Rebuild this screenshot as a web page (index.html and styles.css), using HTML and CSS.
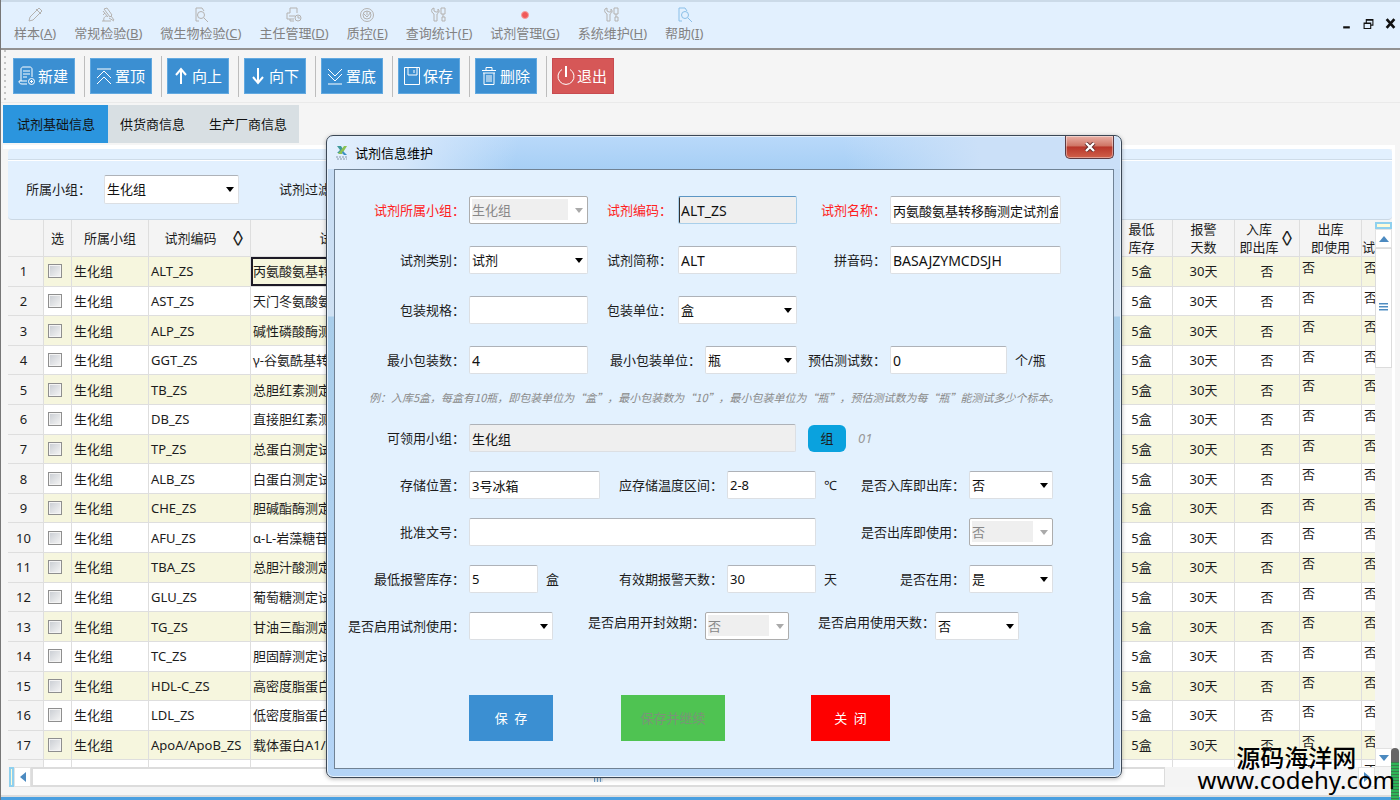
FILE: index.html
```html
<!DOCTYPE html>
<html lang="zh-CN">

<head>
  <meta charset="UTF-8">
  <meta name="viewport" content="width=device-width, initial-scale=1.0">
  <title>试剂信息维护</title>
  <link rel="stylesheet" href="styles.css">
</head>

<body>
  <header class="menubar">
    <nav class="menu">
      <a href="#">
        <svg viewBox="0 0 16 16"><path d="M2 14l1-4 7-7 3 3-7 7zM9 2l5 5M10 3l2-2 3 3-2 2"/></svg>
        <span>样本(<u>A</u>)</span>
      </a>
      <a href="#">
        <svg viewBox="0 0 16 16"><path d="M4 2l3-1 5 7-2 2zM3 4l5 6M2 14h9M4 14c-1-3 1-5 3-5M9 11l5 3M11 9l3 4M5 6l-2 2"/></svg>
        <span>常规检验(<u>B</u>)</span>
      </a>
      <a href="#">
        <svg viewBox="0 0 16 16"><path d="M3 14V1h6l2 3M3 14h3"/><circle cx="8" cy="8" r="3.5"/><path d="M11 11l4 4"/></svg>
        <span>微生物检验(<u>C</u>)</span>
      </a>
      <a href="#">
        <svg viewBox="0 0 16 16"><path d="M4 6V1h7v5M4 6H1v6h7M3 9h6M4 12v2h4"/><circle cx="12" cy="11" r="3"/><path d="M12 9v2h2"/></svg>
        <span>主任管理(<u>D</u>)</span>
      </a>
      <a href="#">
        <svg viewBox="0 0 16 16"><circle cx="8" cy="8" r="6.5"/><circle cx="8" cy="8" r="4"/><path d="M5 7l3 3 4-5M8 4v4"/></svg>
        <span>质控(<u>E</u>)</span>
      </a>
      <a href="#">
        <svg viewBox="0 0 16 16"><path d="M1 2c-1 2 0 4 2 5v7h3V7c2-1 3-3 1-5v3H5L3 4V1zM10 1h4v6h-4zM12 7v3M11 10h3v4h-3z"/></svg>
        <span>查询统计(<u>F</u>)</span>
      </a>
      <a href="#">
        <svg viewBox="0 0 16 16"><circle class="dot" cx="8" cy="8" r="3.5"/></svg>
        <span>试剂管理(<u>G</u>)</span>
      </a>
      <a href="#">
        <svg viewBox="0 0 16 16"><path d="M1 2c-1 2 0 4 2 5v7h3V7c2-1 3-3 1-5v3H5L3 4V1zM10 1h4v6h-4zM12 7v3M11 10h3v4h-3z"/></svg>
        <span>系统维护(<u>H</u>)</span>
      </a>
      <a href="#">
        <svg class="help" viewBox="0 0 16 16"><path d="M3 14V1h6l2 3M3 14h3"/><circle cx="9" cy="8" r="3.5"/><path d="M12 11l4 4"/></svg>
        <span>帮助(<u>I</u>)</span>
      </a>
    </nav>
    <div class="window-buttons">
      <button type="button" aria-label="最小化"><svg viewBox="0 0 10 10"><path d="M2 8.500h6" stroke-width="2"/></svg></button>
      <button type="button" aria-label="还原"><svg viewBox="0 0 10 10"><path d="M1 4.500h6v5H1zM1 5h6M3 4V1.500h6v5H7M3 2h6"/></svg></button>
      <button type="button" aria-label="关闭"><svg viewBox="0 0 10 10"><path d="M1.500 1l7 8M8.500 1l-7 8" stroke-width="2.400"/></svg></button>
    </div>
  </header>

  <div class="toolbar">
    <button type="button" class="tool">
      <svg viewBox="0 0 18 20"><path d="M9 18H4c-2 0-3-1-3-3h8M3 15V3c0-1 1-2 2-2h7c1 0 2 1 2 2v8M5 5h7M5 8h7M5 11h4"/><circle cx="13.500" cy="15.500" r="3"/><path d="M12 15.500h3M13.500 14v3"/></svg>新建
    </button>
    <button type="button" class="tool">
      <svg viewBox="0 0 18 20"><path d="M2 3h14M2 12l7-7 7 7M2 18l7-7 7 7"/></svg>置顶
    </button>
    <button type="button" class="tool">
      <svg viewBox="0 0 18 20"><path d="M9 18V4M4 9l5-6 5 6" stroke-width="2"/></svg>向上
    </button>
    <button type="button" class="tool">
      <svg viewBox="0 0 18 20"><path d="M9 2v14M4 11l5 6 5-6" stroke-width="2"/></svg>向下
    </button>
    <button type="button" class="tool">
      <svg viewBox="0 0 18 20"><path d="M2 18h14M2 3l7 7 7-7M2 8l7 7 7-7"/></svg>置底
    </button>
    <button type="button" class="tool">
      <svg viewBox="0 0 18 20"><path d="M1.500 1.500h15v17h-15zM5 2v7h9V2M11 4v3"/></svg>保存
    </button>
    <button type="button" class="tool">
      <svg viewBox="0 0 18 20"><path d="M2 4.500h14M6 4V1.500h6V4M3 7h12M4 7v11.500h10V7M7 9v7M9 9v7M11 9v7"/></svg>删除
    </button>
    <button type="button" class="tool exit">
      <svg viewBox="0 0 18 20"><path d="M5 3.500a8 8 0 1 0 8 0" /><path d="M9 0v11" stroke-width="2"/></svg>退出
    </button>
  </div>

  <nav class="tabs">
    <a href="#" class="active">试剂基础信息</a>
    <a href="#">供货商信息</a>
    <a href="#">生产厂商信息</a>
  </nav>

  <main class="content">
    <div class="filter">
      <label for="group">所属小组：</label>
      <select id="group">
        <option>生化组</option>
      </select>
      <span class="filter-next">试剂过滤：</span>
    </div>

    <div class="grid">
      <div class="grid-view">
        <table>
          <colgroup>
            <col class="c-num"><col class="c-check"><col class="c-group"><col class="c-code"><col class="c-name">
            <col><col class="c-std"><col class="c-std"><col class="c-in"><col class="c-std"><col class="c-last">
          </colgroup>
          <thead>
            <tr>
              <th></th><th>选</th><th>所属小组</th>
              <th class="sort one">试剂编码<i>◊</i></th>
              <th>试剂名称</th><th></th>
              <th>最低<br>库存</th><th>报警<br>天数</th>
              <th class="sort">入库<br>即出库<i>◊</i></th>
              <th>出库<br>即使用</th><th class="low">试</th>
            </tr>
          </thead>
          <tbody>
            <tr><th>1</th><td><input type="checkbox" aria-label="选择 1"></td><td>生化组</td><td>ALT_ZS</td><td class="current">丙氨酸氨基转移酶测定试剂盒</td><td></td><td>5盒</td><td>30天</td><td>否</td><td>否</td><td>否</td></tr>
            <tr><th>2</th><td><input type="checkbox" aria-label="选择 2"></td><td>生化组</td><td>AST_ZS</td><td>天门冬氨酸氨基转移酶</td><td></td><td>5盒</td><td>30天</td><td>否</td><td>否</td><td>否</td></tr>
            <tr><th>3</th><td><input type="checkbox" aria-label="选择 3"></td><td>生化组</td><td>ALP_ZS</td><td>碱性磷酸酶测定试剂盒</td><td></td><td>5盒</td><td>30天</td><td>否</td><td>否</td><td>否</td></tr>
            <tr><th>4</th><td><input type="checkbox" aria-label="选择 4"></td><td>生化组</td><td>GGT_ZS</td><td>γ-谷氨酰基转移酶</td><td></td><td>5盒</td><td>30天</td><td>否</td><td>否</td><td>否</td></tr>
            <tr><th>5</th><td><input type="checkbox" aria-label="选择 5"></td><td>生化组</td><td>TB_ZS</td><td>总胆红素测定试剂盒</td><td></td><td>5盒</td><td>30天</td><td>否</td><td>否</td><td>否</td></tr>
            <tr><th>6</th><td><input type="checkbox" aria-label="选择 6"></td><td>生化组</td><td>DB_ZS</td><td>直接胆红素测定试剂盒</td><td></td><td>5盒</td><td>30天</td><td>否</td><td>否</td><td>否</td></tr>
            <tr><th>7</th><td><input type="checkbox" aria-label="选择 7"></td><td>生化组</td><td>TP_ZS</td><td>总蛋白测定试剂盒</td><td></td><td>5盒</td><td>30天</td><td>否</td><td>否</td><td>否</td></tr>
            <tr><th>8</th><td><input type="checkbox" aria-label="选择 8"></td><td>生化组</td><td>ALB_ZS</td><td>白蛋白测定试剂盒</td><td></td><td>5盒</td><td>30天</td><td>否</td><td>否</td><td>否</td></tr>
            <tr><th>9</th><td><input type="checkbox" aria-label="选择 9"></td><td>生化组</td><td>CHE_ZS</td><td>胆碱酯酶测定试剂盒</td><td></td><td>5盒</td><td>30天</td><td>否</td><td>否</td><td>否</td></tr>
            <tr><th>10</th><td><input type="checkbox" aria-label="选择 10"></td><td>生化组</td><td>AFU_ZS</td><td>α-L-岩藻糖苷酶</td><td></td><td>5盒</td><td>30天</td><td>否</td><td>否</td><td>否</td></tr>
            <tr><th>11</th><td><input type="checkbox" aria-label="选择 11"></td><td>生化组</td><td>TBA_ZS</td><td>总胆汁酸测定试剂盒</td><td></td><td>5盒</td><td>30天</td><td>否</td><td>否</td><td>否</td></tr>
            <tr><th>12</th><td><input type="checkbox" aria-label="选择 12"></td><td>生化组</td><td>GLU_ZS</td><td>葡萄糖测定试剂盒</td><td></td><td>5盒</td><td>30天</td><td>否</td><td>否</td><td>否</td></tr>
            <tr><th>13</th><td><input type="checkbox" aria-label="选择 13"></td><td>生化组</td><td>TG_ZS</td><td>甘油三酯测定试剂盒</td><td></td><td>5盒</td><td>30天</td><td>否</td><td>否</td><td>否</td></tr>
            <tr><th>14</th><td><input type="checkbox" aria-label="选择 14"></td><td>生化组</td><td>TC_ZS</td><td>胆固醇测定试剂盒</td><td></td><td>5盒</td><td>30天</td><td>否</td><td>否</td><td>否</td></tr>
            <tr><th>15</th><td><input type="checkbox" aria-label="选择 15"></td><td>生化组</td><td>HDL-C_ZS</td><td>高密度脂蛋白胆固醇</td><td></td><td>5盒</td><td>30天</td><td>否</td><td>否</td><td>否</td></tr>
            <tr><th>16</th><td><input type="checkbox" aria-label="选择 16"></td><td>生化组</td><td>LDL_ZS</td><td>低密度脂蛋白胆固醇</td><td></td><td>5盒</td><td>30天</td><td>否</td><td>否</td><td>否</td></tr>
            <tr><th>17</th><td><input type="checkbox" aria-label="选择 17"></td><td>生化组</td><td>ApoA/ApoB_ZS</td><td>载体蛋白A1/B</td><td></td><td>5盒</td><td>30天</td><td>否</td><td>否</td><td>否</td></tr>
            <tr><th></th><td><input type="checkbox" aria-label="选择 18"></td><td></td><td></td><td></td><td></td><td></td><td></td><td></td><td>否</td><td>否</td></tr>
          </tbody>
        </table>
      </div>
      <div class="vscroll">
        <i class="split"></i>
        <button type="button" aria-label="向上滚动"><svg viewBox="0 0 10 6"><path d="M0 6l5-6 5 6z"/></svg></button>
        <div class="thumb"><i></i></div>
        <button type="button" class="end" aria-label="向下滚动"><svg viewBox="0 0 10 6"><path d="M0 0h10L5 6z"/></svg></button>
      </div>
      <div class="hscroll">
        <i class="split"></i>
        <button type="button" aria-label="向左滚动"><svg viewBox="0 0 6 10"><path d="M6 0v10L0 5z"/></svg></button>
        <div class="thumb"><i></i></div>
        <button type="button" class="end" aria-label="向右滚动"><svg viewBox="0 0 6 10"><path d="M0 0l6 5-6 5z"/></svg></button>
      </div>
    </div>
  </main>
  <footer class="statusbar"></footer>

  <section class="dialog" role="dialog" aria-labelledby="dialog-title">
    <div class="titlebar">
      <svg class="logo" viewBox="0 0 12 16">
        <path d="M1 1h4l2 3-2 4H1l3-3z" fill="#3f9a9a"/><path d="M11 1H8L2 9h4z" fill="#8cc152"/><path d="M7 6l4 4H8L6 8z" fill="#3b8fc4"/>
        <path d="M0 12h12M1 14h10" stroke="#8496a8" stroke-dasharray="2 1"/>
      </svg>
      <h1 id="dialog-title">试剂信息维护</h1>
      <button type="button" class="dialog-close" aria-label="关闭">
        <svg viewBox="0 0 12 10"><path d="M2 1l8 8M10 1L2 9" stroke="#5c2a2a" stroke-width="4"/><path d="M2 1l8 8M10 1L2 9" stroke="#fff" stroke-width="2.400"/></svg>
      </button>
    </div>

    <form class="dialog-body">
      <div class="row cols-basic">
        <label class="required" for="f-group">试剂所属小组：</label>
        <select id="f-group" disabled><option>生化组</option></select>
        <label class="required" for="f-code">试剂编码：</label>
        <input class="latin focused" id="f-code" type="text" value="ALT_ZS" readonly>
        <label class="required" for="f-name">试剂名称：</label>
        <input id="f-name" type="text" value="丙氨酸氨基转移酶测定试剂盒">
      </div>
      <div class="row cols-basic">
        <label for="f-type">试剂类别：</label>
        <select id="f-type"><option>试剂</option></select>
        <label for="f-short">试剂简称：</label>
        <input class="latin" id="f-short" type="text" value="ALT">
        <label for="f-pinyin">拼音码：</label>
        <input class="latin" id="f-pinyin" type="text" value="BASAJZYMCDSJH">
      </div>
      <div class="row cols-basic">
        <label for="f-spec">包装规格：</label>
        <input id="f-spec" type="text">
        <label for="f-unit">包装单位：</label>
        <select id="f-unit"><option>盒</option></select>
      </div>
      <div class="row cols-pack">
        <label for="f-min">最小包装数：</label>
        <input class="latin" id="f-min" type="text" value="4">
        <label for="f-minunit">最小包装单位：</label>
        <select id="f-minunit"><option>瓶</option></select>
        <label for="f-tests">预估测试数：</label>
        <input class="latin" id="f-tests" type="text" value="0">
        <span class="unit">个/瓶</span>
      </div>
      <p class="hint">例：入库5盒，每盒有10瓶，即包装单位为“盒”，最小包装数为“10”，最小包装单位为“瓶”，预估测试数为每“瓶”能测试多少个标本。</p>
      <div class="lower">
        <div class="row cols-users">
          <label for="f-users">可领用小组：</label>
          <input id="f-users" type="text" value="生化组" readonly>
          <button type="button" class="pick">组</button>
          <em>01</em>
        </div>
        <div class="row cols-store">
          <label for="f-place">存储位置：</label>
          <input id="f-place" type="text" value="3号冰箱">
          <label for="f-temp">应存储温度区间：</label>
          <input id="f-temp" type="text" value="2-8">
          <span class="unit">℃</span>
          <label for="f-in">是否入库即出库：</label>
          <select id="f-in"><option>否</option></select>
        </div>
        <div class="row cols-licence">
          <label for="f-licence">批准文号：</label>
          <input id="f-licence" type="text">
          <label for="f-out">是否出库即使用：</label>
          <select id="f-out" disabled><option>否</option></select>
        </div>
        <div class="row cols-alarm">
          <label for="f-stock">最低报警库存：</label>
          <input id="f-stock" type="text" value="5">
          <span class="unit">盒</span>
          <label for="f-days">有效期报警天数：</label>
          <input id="f-days" type="text" value="30">
          <span class="unit">天</span>
          <label for="f-active">是否在用：</label>
          <select id="f-active"><option>是</option></select>
        </div>
        <div class="row cols-flags">
          <label for="f-use">是否启用试剂使用：</label>
          <select id="f-use"><option></option></select>
          <label class="raised" for="f-open">是否启用开封效期：</label>
          <select id="f-open" disabled><option>否</option></select>
          <label class="raised" for="f-usedays">是否启用使用天数：</label>
          <select id="f-usedays"><option>否</option></select>
        </div>
      </div>
      <div class="actions">
        <button type="button" class="save">保&ensp;存</button>
        <button type="button" class="save-next" disabled>保存并继续</button>
        <button type="button" class="close">关&ensp;闭</button>
      </div>
    </form>
  </section>

  <div class="watermark">
    <strong>源码海洋网</strong>
    <span>www.codehy.com</span>
  </div>
  <i class="level"></i>
</body>

</html>
```
FILE: styles.css
```css
* {
  box-sizing: border-box;
}

body {
  margin: 0;
  height: 100vh;
  position: relative;
  display: flex;
  flex-direction: column;
  overflow: hidden;
  background-color: #f5f5f5;
  border-left: 1px solid #777;
  font-family: "Noto Sans", "Noto Sans CJK SC", sans-serif;
  font-size: 13px;
  line-height: 20px;
  color: #1c1c1c;
}

button, input, select {
  font: inherit;
  color: inherit;
  margin: 0;
}

button {
  cursor: pointer;
}

svg {
  display: block;
  fill: none;
  stroke: currentColor;
}

/* menu */
.menubar {
  display: flex;
  justify-content: space-between;
  height: 50px;
  margin-left: -1px;
  background-color: #e2f0fe;
  border-top: 2px solid #cbdae8;
  border-bottom: 2px solid #929292;
}

.menu {
  display: flex;
  gap: 18px;
  padding: 5px 0 0 14px;
}

.menu a {
  display: flex;
  flex-direction: column;
  align-items: center;
  color: #828282;
  text-decoration: none;
}

.menu svg {
  width: 16px;
  height: 16px;
  color: #b4b2b0;
}

.menu .help {
  color: #8abfe8;
}

.menu .dot {
  fill: #f05a5a;
  stroke: #f5a0a0;
}

.window-buttons {
  display: flex;
  align-items: center;
  gap: 11px;
  padding: 0 4px 4px 0;
}

.window-buttons button {
  width: 11px;
  height: 11px;
  padding: 0;
  border: none;
  background: none;
  color: #111;
}

/* toolbar */
.toolbar {
  display: flex;
  gap: 15px;
  height: 53px;
  padding: 8px 12px;
  border-bottom: 1px solid #eaeaea;
  background: radial-gradient(circle, #c4c4c4 1px, transparent 1px) 1px 4px / 6px 6px repeat-y;
}

.tool {
  display: flex;
  align-items: center;
  gap: 2px;
  position: relative;
  width: 62px;
  height: 36px;
  padding: 0 0 0 4px;
  border: 1px solid #62a9e0;
  background-color: #3b8fd2;
  color: #fff;
  font-size: 15px;
  white-space: nowrap;
}

.tool svg {
  flex: none;
  width: 18px;
  height: 20px;
}

.tool.exit {
  border-color: #c84b50;
  background-color: #d65757;
}

.tool + .tool::before {
  content: "";
  position: absolute;
  left: -7px;
  top: -3px;
  width: 1px;
  height: 41px;
  background-color: #bdbdbd;
}

/* tabs */
.tabs {
  display: flex;
  align-self: flex-start;
  margin: 2px 0 0 2px;
  background-color: #d8dfe3;
}

.tabs a {
  padding: 9px 12px;
  color: #111;
  text-decoration: none;
}

.tabs .active {
  padding: 9px 13px 9px 14px;
  background-color: #2b95de;
}

/* filter and grid */
.content {
  flex: 1;
  min-height: 0;
  display: flex;
  flex-direction: column;
  margin: 2px 5px 0 2px;
  padding: 0 0 8px 5px;
  border-top: 4px solid #fff;
  border-right: 3px solid #fff;
}

.filter {
  display: flex;
  align-items: center;
  height: 71px;
  padding: 10px 18px 0;
  border-bottom: 1px solid #cbd8e4;
  border-radius: 4px;
  background: linear-gradient(#e2f0fe 10px, #cfdce8 10px, #cfdce8 11px, #fff 11px, #fff 12px, #e2f0fe 12px);
}

.filter select {
  width: 135px;
  height: 29px;
  margin-left: 13px;
}

.filter-next {
  margin-left: 40px;
}

.grid {
  flex: 1;
  min-height: 0;
  display: grid;
  grid-template-columns: 1fr 17px;
  grid-template-rows: 1fr 20px;
}

.grid-view {
  overflow: hidden;
}

table {
  width: 100%;
  height: 570px;
  table-layout: fixed;
  border-collapse: separate;
  border-spacing: 0;
}

.c-num { width: 36px; }
.c-check { width: 28px; }
.c-group { width: 77px; }
.c-code { width: 102px; }
.c-name { width: 190px; }
.c-std { width: 62px; }
.c-in { width: 65px; }
.c-last { width: 13px; }

th, td {
  padding: 0 2px;
  border-right: 1px solid #dedede;
  border-bottom: 1px solid #dedede;
  font-weight: normal;
  white-space: nowrap;
  overflow: hidden;
}

th {
  background-color: #f4f4f4;
}

thead th {
  height: 37px;
  padding: 0;
  line-height: 18px;
}

tbody th {
  padding-right: 6px;
}

.sort {
  position: relative;
  padding-right: 16px;
}

.sort.one {
  padding-right: 18px;
}

.sort i {
  position: absolute;
  right: 3px;
  top: 9px;
  font-size: 18px;
  font-style: normal;
}

thead .low {
  vertical-align: bottom;
}

td {
  background-color: #fff;
}

tbody tr:nth-child(odd) td {
  background-color: #f6f6de;
}

td:nth-child(n+7) {
  text-align: center;
}

td:nth-child(2) {
  padding: 0 4px;
}

tbody td:nth-child(n+10) {
  text-align: left;
  vertical-align: top;
}

tbody .current {
  box-shadow: inset 0 0 0 2px #1d1a26;
}

td:last-child, th:last-child {
  border-right: none;
}

input[type="checkbox"] {
  appearance: none;
  display: block;
  width: 14px;
  height: 14px;
  border: 1px solid #8f8f8f;
  outline: 1px solid #f4f4f4;
  outline-offset: -2px;
  background: linear-gradient(135deg, #c8ccd2, #f6f6f6);
}

/* scrollbars */
.vscroll, .hscroll {
  display: flex;
  background-color: #f4f4f4;
}

.vscroll {
  flex-direction: column;
  padding-top: 2px;
}

.hscroll {
  padding-left: 1px;
}

.vscroll button, .hscroll button {
  display: flex;
  align-items: center;
  justify-content: center;
  padding: 0;
  border: 1px solid #e2e2e2;
  background-color: #fff;
  color: #4c8ac0;
}

.vscroll svg, .hscroll svg {
  fill: currentColor;
  stroke: none;
}

.vscroll button { height: 19px; }
.vscroll svg { width: 10px; height: 6px; }
.hscroll button { width: 17px; }
.hscroll svg { width: 6px; height: 10px; }

.split {
  border: 2px solid #8fd0ee;
  background-color: #fdfbd8;
}

.vscroll .split { height: 7px; }
.hscroll .split { width: 5px; }

.thumb {
  display: flex;
  align-items: center;
  justify-content: center;
  border: 1px solid #dcdcdc;
  background-color: #fff;
}

.vscroll .thumb { height: 22%; }

.hscroll .thumb {
  width: 83%;
  border-width: 2px 1px 2px 2px;
}

.thumb i {
  width: 9px;
  height: 9px;
}

.vscroll .thumb i { background-image: repeating-linear-gradient(#4f8cc0 0 1px, #a9c8e2 1px 2px, #fff 2px 3px); }
.hscroll .thumb i { background-image: repeating-linear-gradient(90deg, #6d9bc4 0 1px, #e4eef6 1px 3px); }

.vscroll .end { margin-top: auto; }
.hscroll .end { margin-left: auto; }

.statusbar {
  height: 5px;
  margin-left: -1px;
  border-top: 2px solid #dcdcdc;
  background-color: #4a9fe0;
}

/* dialog */
.dialog {
  position: absolute;
  left: 325px;
  right: 278px;
  top: 135px;
  padding: 0 7px 8px;
  border: 1px solid #3c4856;
  border-radius: 7px;
  background:
    linear-gradient(100deg, #e4f0fd 0, #d5e7fb 80px, transparent 190px) 0 0 / 100% 33px no-repeat,
    linear-gradient(80deg, transparent 65%, #cbe0f8 82%) 0 0 / 100% 33px no-repeat,
    linear-gradient(#b9d9fa, #a7cff5) 0 0 / 100% 33px no-repeat,
    linear-gradient(#c5dcf5, #cfe1f3 180px, #a8cdea 181px, #b4d4f6);
  box-shadow: inset 0 0 0 1px #e6f1fc, 0 1px 4px rgba(0, 0, 0, 0.3);
}

.titlebar {
  display: flex;
  align-items: center;
  height: 33px;
  padding-left: 2px;
}

.logo {
  width: 12px;
  height: 16px;
  margin-right: 7px;
  stroke: none;
}

.titlebar h1 {
  margin: 0;
  font-size: 13px;
  font-weight: normal;
  line-height: 18px;
  color: #000;
}

.dialog-close {
  display: flex;
  align-items: center;
  justify-content: center;
  align-self: flex-start;
  width: 49px;
  height: 23px;
  margin-left: auto;
  padding: 0;
  border: 1px solid #5c3a42;
  border-top: none;
  border-radius: 0 0 5px 5px;
  background: linear-gradient(#e9b0a6, #cf7565 45%, #b8362a 50%, #d0604a);
  box-shadow: inset 0 0 0 1px rgba(255, 255, 255, 0.4);
}

.dialog-close svg {
  width: 12px;
  height: 10px;
}

.dialog-body {
  padding: 26px 0 27px;
  border: 1px solid #708294;
  background-color: #e3f1fe;
}

.row {
  display: grid;
  align-items: center;
  height: 28px;
}

.row + .row {
  margin-top: 22px;
}

.lower .row + .row {
  margin-top: 19px;
}

.cols-basic { grid-template-columns: 134px 119px 90px 119px 93px 171px; }
.cols-pack { grid-template-columns: 134px 119px 117px 92px 93px 117px 60px; }
.cols-users { grid-template-columns: 134px 327px 62px 60px; }
.cols-store { grid-template-columns: 134px 131px 127px 89px 25px 128px 84px; }
.cols-licence { grid-template-columns: 134px 347px 153px 84px; }
.cols-alarm { grid-template-columns: 134px 69px 25px 164px 89px 25px 128px 84px; }
.cols-flags { grid-template-columns: 134px 84px 152px 84px 146px 84px; }

.row label {
  padding-right: 4px;
  text-align: right;
  white-space: nowrap;
}

.cols-basic label:nth-of-type(2) {
  padding-right: 6px;
}

.row .raised {
  align-self: start;
  padding-right: 0;
}

.row .required {
  color: #f22;
}

input[type="text"], select {
  width: 100%;
  height: 100%;
  min-width: 0;
  padding: 0 2px;
  border: 1px solid #dcdfe3;
  border-top-color: #aeb2b8;
  border-radius: 2px;
  outline: none;
  background-color: #fff;
  color: #111;
}

input[type="text"].latin {
  font-size: 14px;
}

input[type="text"]:read-only {
  background-color: #efefef;
}

input[type="text"].focused {
  border-color: #a9cfea;
  border-top-color: #5c96c4;
  box-shadow: inset 2px 0 0 -1px #333;
}

select {
  appearance: none;
  background-image: url("data:image/svg+xml,%3Csvg xmlns='http://www.w3.org/2000/svg' viewBox='0 0 8 5'%3E%3Cpath d='M0 0h8L4 5z'/%3E%3C/svg%3E");
  background-repeat: no-repeat;
  background-position: right 4px center;
  background-size: 8px 5px;
}

select:disabled {
  border: 1px solid #adadad;
  opacity: 1;
  color: #888;
  background-image:
    url("data:image/svg+xml,%3Csvg xmlns='http://www.w3.org/2000/svg' viewBox='0 0 8 5'%3E%3Cpath fill='%23aaa' d='M0 0h8L4 5z'/%3E%3C/svg%3E"),
    linear-gradient(90deg, #efefef calc(100% - 17px), #fff 0);
  background-size: 8px 5px, calc(100% - 4px) calc(100% - 5px);
  background-position: right 4px center, 2px 2px;
}

.filter select {
  width: 135px;
  height: 29px;
}

.unit {
  padding-left: 8px;
}

.hint {
  margin: 14px 0 18px 34px;
  font-family: "Noto Sans CJK SC", sans-serif;
  font-size: 11px;
  line-height: 18px;
  font-style: italic;
  color: #8a8a8a;
  white-space: nowrap;
}

.pick {
  width: 38px;
  height: 27px;
  margin-left: 12px;
  padding: 0;
  border: none;
  border-radius: 6px;
  background-color: #0aa2de;
}

.cols-users em {
  color: #999;
}

.actions {
  display: flex;
  padding: 55px 0 0 134px;
}

.actions button {
  height: 46px;
  padding: 0;
  border: none;
  color: #fff;
}

.actions .save {
  width: 84px;
  background-color: #3b8fd2;
}

.actions .save-next {
  width: 104px;
  margin-left: 68px;
  background-color: #4fc352;
  color: #7b9479;
}

.actions .close {
  width: 79px;
  margin-left: 86px;
  background-color: #fe0000;
}

/* page overlay */
.watermark {
  position: absolute;
  right: 5px;
  bottom: 9px;
  display: flex;
  flex-direction: column;
  align-items: center;
  font-size: 24px;
  line-height: 22px;
  color: #000;
  z-index: 1;
}

.watermark strong {
  font-weight: 500;
}

.level {
  position: absolute;
  right: 1px;
  bottom: 0;
  width: 8px;
  height: 52px;
  border-radius: 4px 4px 0 0;
  background: linear-gradient(#666 14px, transparent 14px), repeating-linear-gradient(#2fb457 0 2px, #3a7c4c 2px 3px);
}
```
